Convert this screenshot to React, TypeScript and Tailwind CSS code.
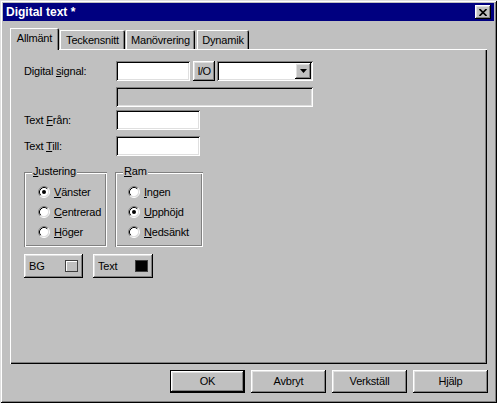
const raised =
  "shadow-[inset_-1px_-1px_#000,inset_1px_1px_#fff,inset_-2px_-2px_#808080,inset_2px_2px_#dfdfdf]";
const sunken =
  "shadow-[inset_1px_1px_#808080,inset_-1px_-1px_#fff,inset_2px_2px_#000,inset_-2px_-2px_#dfdfdf]";
const etched =
  "shadow-[inset_1px_1px_#808080,inset_-1px_-1px_#fff,inset_2px_2px_#fff,inset_-2px_-2px_#808080]";

function U({ children }: { children: string }) {
  return <span className="underline underline-offset-[1px]">{children}</span>;
}

function Radio({ checked }: { checked?: boolean }) {
  return (
    <svg width="12" height="12" viewBox="0 0 12 12" className="shrink-0">
      <circle cx="6" cy="6" r="4.5" fill="#fff" />
      <path d="M2.11 9.89 A5.5 5.5 0 0 1 9.89 2.11" stroke="#808080" fill="none" />
      <path d="M9.89 2.11 A5.5 5.5 0 0 1 2.11 9.89" stroke="#fff" fill="none" />
      <path d="M2.82 9.18 A4.5 4.5 0 0 1 9.18 2.82" stroke="#000" fill="none" />
      <path d="M9.18 2.82 A4.5 4.5 0 0 1 2.82 9.18" stroke="#dfdfdf" fill="none" />
      {checked && <circle cx="6" cy="6" r="2" fill="#000" />}
    </svg>
  );
}

function RadioRow({ checked, first, rest }: { checked?: boolean; first: string; rest: string }) {
  return (
    <div className="flex items-center gap-[4px] h-[20px]">
      <Radio checked={checked} />
      <span>
        <U>{first}</U>
        {rest}
      </span>
    </div>
  );
}

function GroupBox({
  title,
  width,
  padLeft,
  children,
}: {
  title: React.ReactNode;
  width: string;
  padLeft: string;
  children: React.ReactNode;
}) {
  return (
    <div className={`relative h-[75px] pt-[10px] ${width} ${padLeft} ${etched}`}>
      <span className="absolute left-[8px] top-[-7px] bg-[#c0c0c0] px-[1px] leading-[13px]">
        {title}
      </span>
      {children}
    </div>
  );
}

function Tab({ label, selected, className }: { label: string; selected?: boolean; className: string }) {
  return (
    <div
      className={`flex items-center justify-center shadow-[inset_1px_1px_#fff,inset_-1px_0_#000,inset_-2px_0_#808080] rounded-tr-[2px] ${
        selected ? "relative z-10 h-[22px] -mb-[1px] bg-[#c0c0c0] pb-[2px]" : "h-[19px] pt-[1px]"
      } ${className}`}
    >
      {label}
    </div>
  );
}

function DialogButton({ label, isDefault }: { label: string; isDefault?: boolean }) {
  return (
    <button
      className={`w-[75px] h-[23px] flex items-center justify-center ${raised} ${
        isDefault ? "border border-black" : ""
      }`}
    >
      {label}
    </button>
  );
}

export default function App() {
  return (
    <div
      className={`w-[497px] h-[403px] bg-[#c0c0c0] p-[3px] text-[11px] leading-[13px] tracking-[-0.2px] text-black font-['Liberation_Sans',Arial,sans-serif] shadow-[inset_1px_1px_#dfdfdf,inset_-1px_-1px_#000,inset_2px_2px_#fff,inset_-2px_-2px_#808080]`}
    >
      {/* title bar */}
      <div className="h-[18px] bg-[#000080] flex items-center justify-between pl-[3px] pr-[3px]">
        <span className="text-white font-bold text-[12px] tracking-normal">Digital text *</span>
        <div className={`w-[16px] h-[14px] bg-[#c0c0c0] flex items-center justify-center ${raised}`}>
          <svg width="8" height="7" viewBox="0 0 8 7">
            <path d="M0.5 0 L7.5 7 M7.5 0 L0.5 7" stroke="#000" strokeWidth="1.6" />
          </svg>
        </div>
      </div>

      <div className="pl-[7px] pt-[7px]">
        {/* tabs */}
        <div className="flex items-end h-[21px]">
          <Tab label="Allmänt" selected className="w-[49px]" />
          <Tab label="Teckensnitt" className="w-[65px] ml-[1px]" />
          <Tab label="Manövrering" className="w-[69px] ml-[1px]" />
          <Tab label="Dynamik" className="w-[52px] ml-[2px]" />
        </div>

        {/* panel */}
        <div className="w-[477px] h-[315px] pl-[14px] pt-[12px] shadow-[inset_1px_1px_#fff,inset_-1px_-1px_#000,inset_-2px_-2px_#808080]">
          <div className="flex items-center h-[20px]">
            <span className="w-[92px]">
              Digital <U>s</U>ignal:
            </span>
            <div className={`w-[74px] h-[20px] bg-white ${sunken}`} />
            <button className={`ml-[3px] w-[22px] h-[20px] flex items-center justify-center tracking-[-0.5px] ${raised}`}>
              I/O
            </button>
            <div className={`ml-[2px] w-[96px] h-[20px] bg-white p-[2px] flex justify-end ${sunken}`}>
              <div className={`w-[16px] h-[16px] bg-[#c0c0c0] flex items-center justify-center ${raised}`}>
                <svg width="7" height="4" viewBox="0 0 7 4">
                  <path d="M0 0 H7 L3.5 4 Z" fill="#000" />
                </svg>
              </div>
            </div>
          </div>

          <div className={`mt-[6px] ml-[92px] w-[197px] h-[20px] ${sunken}`} />

          <div className="flex items-center h-[20px] mt-[3px]">
            <span className="w-[92px]">
              Text <U>F</U>rån:
            </span>
            <div className={`w-[84px] h-[20px] bg-white ${sunken}`} />
          </div>

          <div className="flex items-center h-[20px] mt-[6px]">
            <span className="w-[92px]">
              Text <U>T</U>ill:
            </span>
            <div className={`w-[84px] h-[20px] bg-white ${sunken}`} />
          </div>

          <div className="flex mt-[16px]">
            <GroupBox
              width="w-[83px]"
              padLeft="pl-[14px]"
              title={
                <>
                  <U>J</U>ustering
                </>
              }
            >
              <RadioRow checked first="V" rest="änster" />
              <RadioRow first="C" rest="entrerad" />
              <RadioRow first="H" rest="öger" />
            </GroupBox>
            <div className="ml-[8px]">
              <GroupBox
                width="w-[88px]"
                padLeft="pl-[13px]"
                title={
                  <>
                    <U>R</U>am
                  </>
                }
              >
                <RadioRow first="I" rest="ngen" />
                <RadioRow checked first="U" rest="pphöjd" />
                <RadioRow first="N" rest="edsänkt" />
              </GroupBox>
            </div>
          </div>

          <div className="flex mt-[7px]">
            <button className={`w-[59px] h-[24px] flex items-center justify-between pl-[5px] pr-[5px] ${raised}`}>
              <span>BG</span>
              <span className="w-[13px] h-[12px] border border-[#404040] bg-[#c0c0c0] shadow-[inset_1px_1px_#fff]" />
            </button>
            <button className={`ml-[10px] w-[60px] h-[24px] flex items-center justify-between pl-[5px] pr-[5px] ${raised}`}>
              <span>Text</span>
              <span className="w-[13px] h-[12px] border border-[#404040] bg-black" />
            </button>
          </div>
        </div>

        {/* dialog buttons */}
        <div className="w-[478px] flex justify-end gap-[6px] mt-[6px]">
          <DialogButton label="OK" isDefault />
          <DialogButton label="Avbryt" />
          <DialogButton label="Verkställ" />
          <DialogButton label="Hjälp" />
        </div>
      </div>
    </div>
  );
}
